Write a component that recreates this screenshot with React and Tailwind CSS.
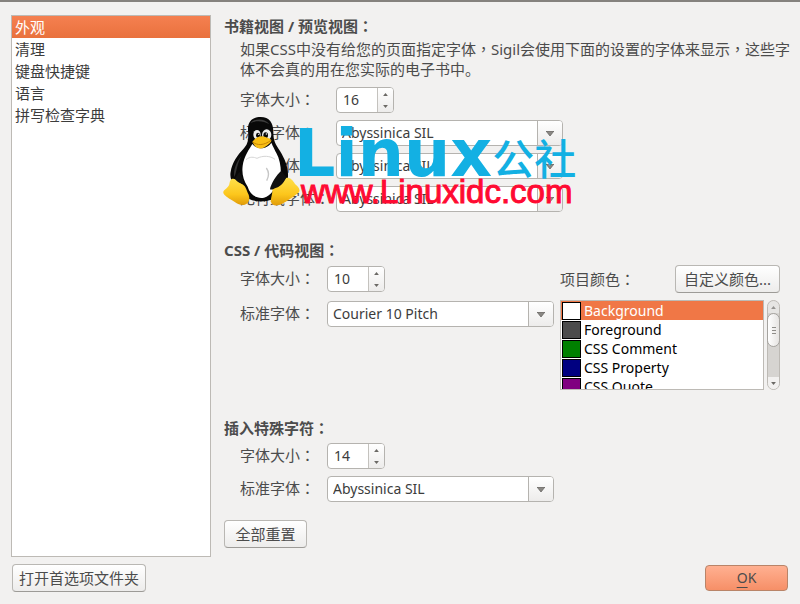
import React, { useState } from "react";

const categories = ["外观", "清理", "键盘快捷键", "语言", "拼写检查字典"];

const colors = [
  { name: "Background", swatch: "bg-white" },
  { name: "Foreground", swatch: "bg-[#4c4c4c]" },
  { name: "CSS Comment", swatch: "bg-[#008000]" },
  { name: "CSS Property", swatch: "bg-[#000080]" },
  { name: "CSS Quote", swatch: "bg-[#800080]" },
];

const buttonStyle =
  "h-7 rounded border border-[#b9b7b3] border-b-[#9d9b97] bg-linear-to-b from-white to-[#edeceb] text-[15px] leading-5";

// full-width punctuation sits in the middle of its cell
function Mark({ children }) {
  return (
    <span
      lang="zh-TW"
      className="font-['Noto_Sans_CJK_TC','Noto_Sans_CJK_SC',sans-serif]"
    >
      {children}
    </span>
  );
}

function Arrow({ up, small }) {
  return (
    <svg
      viewBox="0 0 8 5"
      className={small ? "h-[3px] w-[5px]" : "h-[5px] w-2"}
      aria-hidden="true"
    >
      <path
        d={up ? "M0 5 4 0 8 5Z" : "M0 0H8L4 5Z"}
        fill={small ? "#6b6965" : "#8a8884"}
        stroke={small ? "none" : "#5f5d5a"}
        strokeWidth="0.7"
      />
    </svg>
  );
}

function Heading({ children }) {
  return (
    <h2 className="text-[15px] leading-5 font-bold">
      {children}
      <Mark>：</Mark>
    </h2>
  );
}

function Row({ id, label, wide, children }) {
  return (
    <div className="flex items-center pl-4">
      <label
        htmlFor={id}
        className={`${wide ? "w-24" : "w-[87px]"} shrink-0 pb-[2px] text-[15px] leading-5 whitespace-nowrap`}
      >
        {label}
        <Mark>：</Mark>
      </label>
      {children}
    </div>
  );
}

function SpinBox({ id, initial }) {
  const [value, setValue] = useState(initial);

  return (
    <div className="flex h-[26px] w-[58px] overflow-hidden rounded border border-[#b5b3af] bg-white">
      <input
        id={id}
        type="number"
        value={value}
        onChange={(e) => setValue(Number(e.target.value))}
        className="w-10 appearance-none pl-[6px] text-sm text-[#3c3c3c] outline-none [&::-webkit-inner-spin-button]:appearance-none"
      />
      <div className="flex flex-1 flex-col border-l border-[#c4c2be] bg-linear-to-b from-white to-[#edeceb]">
        <button
          type="button"
          aria-label="增大"
          onClick={() => setValue(value + 1)}
          className="flex flex-1 items-center justify-center"
        >
          <Arrow up small />
        </button>
        <button
          type="button"
          aria-label="减小"
          onClick={() => setValue(value - 1)}
          className="flex flex-1 items-center justify-center"
        >
          <Arrow small />
        </button>
      </div>
    </div>
  );
}

function FontSelect({ id, font }) {
  return (
    <div className="relative h-[26px] w-[227px]">
      <select
        id={id}
        className="h-full w-full appearance-none rounded border border-[#b5b3af] bg-white pl-[5px] text-sm text-[#3c3c3c]"
      >
        <option>{font}</option>
      </select>
      <span className="pointer-events-none absolute inset-y-px right-px flex w-[25px] items-center justify-center rounded-r-[3px] border-l border-[#b5b3af] bg-linear-to-b from-white to-[#edeceb]">
        <Arrow />
      </span>
    </div>
  );
}

function ColorList() {
  const [selected, setSelected] = useState("Background");

  return (
    <div className="flex h-[90px] gap-[3px]">
      <ul className="flex-1 overflow-hidden border border-[#bdbab5] bg-white">
        {colors.map((c) => (
          <li key={c.name}>
            <button
              type="button"
              onClick={() => setSelected(c.name)}
              className={`flex h-[19px] w-full items-center gap-[3px] pl-px text-sm ${
                selected === c.name ? "bg-[#f07746] text-white" : "text-black"
              }`}
            >
              <span className={`h-[18px] w-[19px] border border-black ${c.swatch}`} />
              {c.name}
            </button>
          </li>
        ))}
      </ul>
      <div className="flex w-[13px] flex-col items-center rounded-full border border-[#bdbab5] bg-[#d6d4d1]">
        <span className="flex h-3 w-full items-center justify-center rounded-t-full bg-[#f2f1f0] opacity-60">
          <Arrow up small />
        </span>
        <span className="flex h-[34px] w-[13px] flex-col items-center justify-center gap-[2px] rounded-full border border-[#a5a39f] bg-linear-to-r from-white to-[#e6e4e2]">
          <i className="h-px w-1 bg-[#8f8d89]" />
          <i className="h-px w-1 bg-[#8f8d89]" />
          <i className="h-px w-1 bg-[#8f8d89]" />
        </span>
        <span className="mt-auto flex h-3 w-full items-center justify-center rounded-b-full bg-[#f2f1f0]">
          <Arrow small />
        </span>
      </div>
    </div>
  );
}

function Penguin() {
  return (
    <svg viewBox="9 20 231 267" className="h-[89px] w-[77px]" aria-hidden="true">
      <defs>
        <linearGradient id="foot" x1="0" y1="0" x2="0" y2="1">
          <stop offset="0" stopColor="#ffe04a" />
          <stop offset="0.6" stopColor="#fcc61c" />
          <stop offset="1" stopColor="#e09b08" />
        </linearGradient>
      </defs>
      <path
        d="M84 60C82 34 98 20 122 20C148 20 160 38 160 64C160 92 166 100 180 122C196 148 208 178 203 207C198 236 178 266 140 272C108 276 84 270 70 250C50 232 26 214 32 184C36 158 54 132 70 116C84 102 86 88 84 60Z"
        fill="#080808"
      />
      <path d="M92 38C102 24 136 22 148 42C132 32 108 30 92 38Z" fill="#3c3c3c" />
      <path
        d="M97 101C88 116 72 138 68 166C65 190 70 211 83 229C90 252 108 266 132 262C154 257 164 232 180 216C186 187 182 151 169 128C161 112 157 104 154 97C144 113 113 123 97 101Z"
        fill="#fff"
      />
      <path d="M78 148C90 138 101 140 111 144C128 135 151 136 165 147" fill="none" stroke="#d5d5d5" strokeWidth="3" />
      <path d="M139 173C148 185 147 198 140 211" fill="none" stroke="#c6c6c6" strokeWidth="4" />
      <path d="M64 137C46 160 40 181 43 200C50 186 51 160 64 137Z" fill="#343434" />
      <ellipse cx="111" cy="73" rx="11" ry="14" fill="#eee" />
      <ellipse cx="140" cy="73" rx="14" ry="16" fill="#eee" />
      <ellipse cx="114" cy="75" rx="6" ry="8" fill="#080808" />
      <ellipse cx="137" cy="75" rx="7" ry="9" fill="#080808" />
      <circle cx="116" cy="72" r="2" fill="#fff" />
      <circle cx="139" cy="71" r="2" fill="#fff" />
      <path
        d="M97 95C105 83 117 78 126 78C137 80 149 84 154 89C155 97 145 103 134 111C126 117 111 115 104 106Z"
        fill="#f9be13"
      />
      <path d="M98 95C112 106 131 106 153 90" fill="none" stroke="#c88500" strokeWidth="3" />
      <path
        d="M35 206C45 201 54 214 64 220C77 224 79 239 86 253C91 267 87 281 72 284C58 286 46 276 31 267C20 259 8 252 10 244C13 238 25 232 28 222C29 215 30 209 35 206Z"
        fill="url(#foot)"
      />
      <path
        d="M157 235C159 248 151 264 153 275C157 288 172 287 186 281C201 272 224 258 237 246C242 236 234 229 225 221C219 209 208 199 198 203C190 213 184 226 172 229C164 229 159 229 157 235Z"
        fill="url(#foot)"
      />
      <path d="M58 184C64 194 71 207 70 219C60 221 50 213 45 205Z" fill="#111" />
      <path d="M184 181C170 192 152 222 150 237C155 240 162 234 169 232C181 230 193 215 199 201Z" fill="#111" />
    </svg>
  );
}

function Watermark() {
  return (
    <div className="pointer-events-none absolute top-[102px] left-3 flex">
      <Penguin />
      <div className="relative whitespace-nowrap">
        <div className="flex items-start text-[#13b0e3]">
          <span className="-ml-[6px] font-['DejaVu_Sans'] text-[65px] leading-[74px] font-bold">
            Linux
          </span>
          <span className="mt-2 text-[42px] leading-[68px] font-medium">公社</span>
        </div>
        <p className="absolute top-[57px] left-px font-['Liberation_Sans'] text-[33px] leading-9 text-[#ff0a32] [-webkit-text-stroke:1px_#ff0a32]">
          www.Linuxidc.com
        </p>
      </div>
    </div>
  );
}

export default function App() {
  const [category, setCategory] = useState("外观");

  return (
    <div
      lang="zh-CN"
      className="flex min-h-screen flex-col border-t-2 border-[#85827e] bg-[#f2f1f0] px-[11px] pt-[13px] pb-3 font-['Noto_Sans','Noto_Sans_CJK_SC',sans-serif] text-[#4c4c4c]"
    >
      <div className="flex flex-1">
        <ul className="w-[200px] shrink-0 border border-[#bdbab5] bg-white">
          {categories.map((c) => (
            <li key={c}>
              <button
                type="button"
                onClick={() => setCategory(c)}
                className={`block h-[22px] w-full pl-[3px] text-left text-[15px] leading-[22px] ${
                  category === c
                    ? "bg-linear-to-b from-[#f58050] to-[#e9713d] text-white"
                    : "text-[#3c3c3c]"
                }`}
              >
                {c}
              </button>
            </li>
          ))}
        </ul>

        <main className="relative min-w-0 flex-1 pt-px pl-[13px]">
          <section>
            <Heading>书籍视图 / 预览视图</Heading>
            <p className="mt-[3px] -mr-2 pl-4 text-[15px] leading-5">
              如果CSS中没有给您的页面指定字体<Mark>，</Mark>Sigil会使用下面的设置的字体来显示
              <Mark>，</Mark>这些字体不会真的用在您实际的电子书中。
            </p>
            <div className="mt-2 flex flex-col gap-[7px]">
              <Row id="book-size" label="字体大小" wide>
                <SpinBox id="book-size" initial={16} />
              </Row>
              <Row id="book-standard" label="标准字体" wide>
                <FontSelect id="book-standard" font="Abyssinica SIL" />
              </Row>
              <Row id="book-serif" label="衬线字体" wide>
                <FontSelect id="book-serif" font="Abyssinica SIL" />
              </Row>
              <Row id="book-sans" label="无衬线字体" wide>
                <FontSelect id="book-sans" font="Abyssinica SIL" />
              </Row>
            </div>
          </section>

          <section className="mt-7">
            <Heading>CSS / 代码视图</Heading>
            <div className="mt-[5px] flex justify-between pr-[9px]">
              <div className="flex flex-col gap-[9px] pt-px">
                <Row id="code-size" label="字体大小">
                  <SpinBox id="code-size" initial={10} />
                </Row>
                <Row id="code-font" label="标准字体">
                  <FontSelect id="code-font" font="Courier 10 Pitch" />
                </Row>
              </div>
              <div className="w-[220px]">
                <div className="mb-[7px] flex items-center justify-between">
                  <span className="text-[15px] leading-5">
                    项目颜色<Mark>：</Mark>
                  </span>
                  <button type="button" className={`${buttonStyle} w-[105px]`}>
                    自定义颜色...
                  </button>
                </div>
                <ColorList />
              </div>
            </div>
          </section>

          <section className="mt-7">
            <Heading>插入特殊字符</Heading>
            <div className="mt-[5px] flex flex-col gap-[7px]">
              <Row id="char-size" label="字体大小">
                <SpinBox id="char-size" initial={14} />
              </Row>
              <Row id="char-font" label="标准字体">
                <FontSelect id="char-font" font="Abyssinica SIL" />
              </Row>
            </div>
          </section>

          <button type="button" className={`${buttonStyle} mt-[18px] w-[83px]`}>
            全部重置
          </button>

          <Watermark />
        </main>
      </div>

      <footer className="mt-[7px] flex items-center justify-between pr-px pl-px">
        <button type="button" className={`${buttonStyle} w-[134px]`}>
          打开首选项文件夹
        </button>
        <button
          type="button"
          className="h-[26px] w-[83px] rounded border border-[#b98468] bg-linear-to-b from-[#ffb091] to-[#f68f67] text-sm"
        >
          <span className="underline decoration-[#4c4c4c] underline-offset-4">O</span>K
        </button>
      </footer>
    </div>
  );
}
